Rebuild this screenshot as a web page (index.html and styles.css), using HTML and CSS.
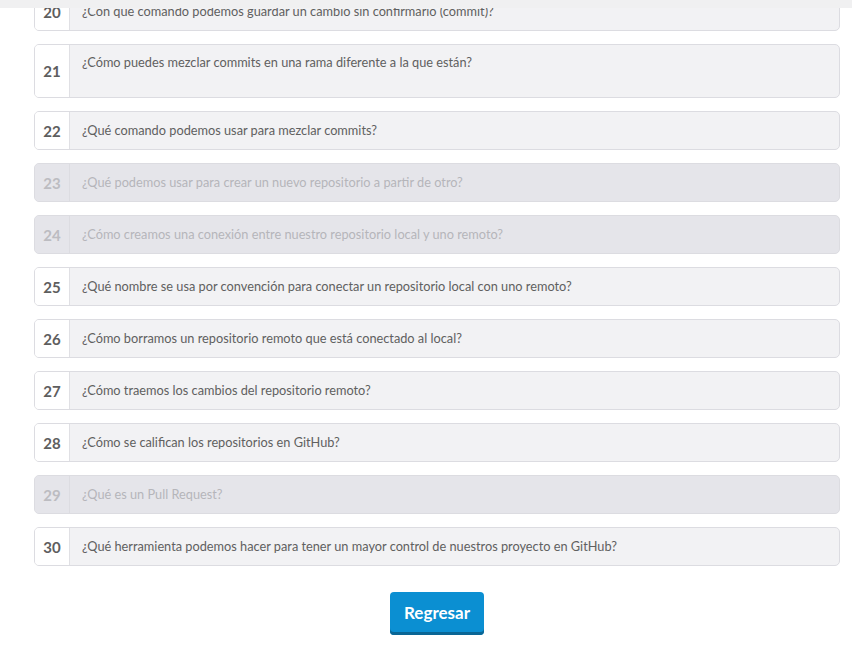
FILE: index.html
```html
<!DOCTYPE html>
<html lang="es">
<head>
<meta charset="utf-8">
<title>Preguntas</title>
<link rel="stylesheet" href="styles.css">
</head>
<body>
<div class="topbar"></div>
<main class="page">
  <ol class="qlist">
    <li class="q"><span class="num">20</span><span class="text">¿Con que comando podemos guardar un cambio sin confirmario (commit)?</span></li>
    <li class="q q-tall"><span class="num">21</span><span class="text">¿Cómo puedes mezclar commits en una rama diferente a la que están?</span></li>
    <li class="q"><span class="num">22</span><span class="text">¿Qué comando podemos usar para mezclar commits?</span></li>
    <li class="q q-off"><span class="num">23</span><span class="text">¿Qué podemos usar para crear un nuevo repositorio a partir de otro?</span></li>
    <li class="q q-off"><span class="num">24</span><span class="text">¿Cómo creamos una conexión entre nuestro repositorio local y uno remoto?</span></li>
    <li class="q"><span class="num">25</span><span class="text">¿Qué nombre se usa por convención para conectar un repositorio local con uno remoto?</span></li>
    <li class="q"><span class="num">26</span><span class="text">¿Cómo borramos un repositorio remoto que está conectado al local?</span></li>
    <li class="q"><span class="num">27</span><span class="text">¿Cómo traemos los cambios del repositorio remoto?</span></li>
    <li class="q"><span class="num">28</span><span class="text">¿Cómo se califican los repositorios en GitHub?</span></li>
    <li class="q q-off"><span class="num">29</span><span class="text">¿Qué es un Pull Request?</span></li>
    <li class="q"><span class="num">30</span><span class="text">¿Qué herramienta podemos hacer para tener un mayor control de nuestros proyecto en GitHub?</span></li>
  </ol>
  <div class="actions">
    <button class="btn" type="button">Regresar</button>
  </div>
</main>
</body>
</html>
```
FILE: styles.css
```css
* { box-sizing: border-box; }
html, body {
  margin: 0;
  padding: 0;
  background: #ffffff;
  font-family: Lato, "Open Sans", "Liberation Sans", sans-serif;
  color: #606060;
  overflow: hidden;
}
.topbar {
  position: fixed;
  top: 0;
  left: 0;
  width: 852px;
  height: 8px;
  background: #f0f0f1;
  z-index: 5;
}
.page {
  width: 806px;
  margin-left: 34px;
}
.qlist {
  list-style: none;
  margin: -8px 0 0 0;
  padding: 0;
  display: flex;
  flex-direction: column;
  gap: 13px;
}
.q {
  display: flex;
  align-items: stretch;
  border: 1px solid #dcdce1;
  border-radius: 5px;
  background: #f2f2f4;
  overflow: hidden;
}
.num {
  flex: 0 0 35px;
  display: flex;
  align-items: center;
  justify-content: center;
  background: #ffffff;
  border-right: 1px solid #e0e0e4;
  font-weight: 700;
  font-size: 15px;
  color: #5e5e5e;
}
.text {
  flex: 1;
  padding: 10px 12px;
  font-size: 12.75px;
  line-height: 17px;
  color: #606060;
}
.q-tall .text {
  padding-top: 9px;
  padding-bottom: 26px;
}
.q-off {
  background: #e5e5ea;
  border-color: #dcdce1;
}
.q-off .num {
  background: #e5e5ea;
  color: #bcbcc1;
  border-right-color: #dcdce1;
}
.q-off .text {
  color: #b5b5ba;
}
.actions {
  display: flex;
  justify-content: center;
  margin-top: 26px;
}
.btn {
  width: 94px;
  height: 43px;
  border: none;
  border-radius: 4px;
  background: #0b8fd2;
  box-shadow: inset 0 -3px 0 #0a6695;
  color: #ffffff;
  font-family: Lato, "Open Sans", "Liberation Sans", sans-serif;
  font-weight: 700;
  font-size: 17px;
  padding: 0 0 3px 0;
  cursor: pointer;
}
```
